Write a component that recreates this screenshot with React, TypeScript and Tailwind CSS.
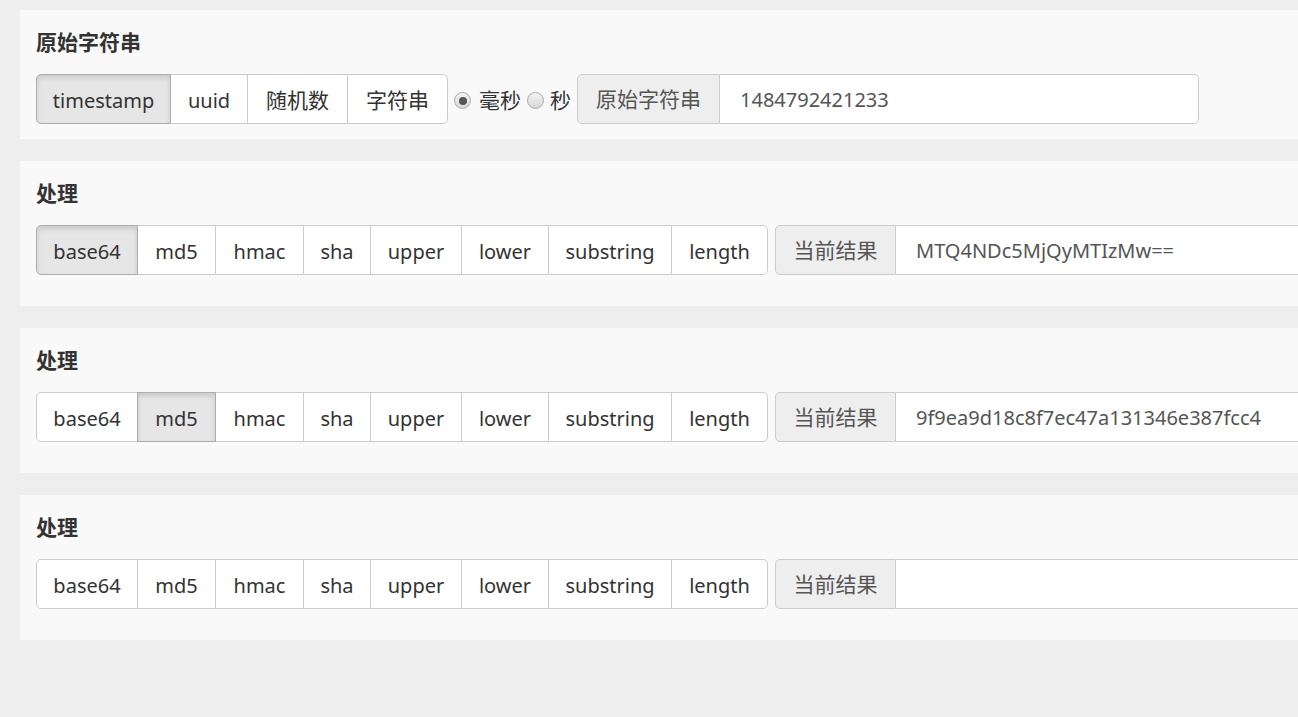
import React from "react";

const FONT = { fontFamily: '"Noto Sans", "Noto Sans CJK SC", sans-serif' };

type Btn = { label: string; w: string; cjk?: boolean };

const ops: Btn[] = [
  { label: "base64", w: "w-[102px]" },
  { label: "md5", w: "w-[79px]" },
  { label: "hmac", w: "w-[89px]" },
  { label: "sha", w: "w-[68px]" },
  { label: "upper", w: "w-[92px]" },
  { label: "lower", w: "w-[88px]" },
  { label: "substring", w: "w-[124px]" },
  { label: "length", w: "w-[97px]" },
];

const srcs: Btn[] = [
  { label: "timestamp", w: "w-[135px]" },
  { label: "uuid", w: "w-[78px]" },
  { label: "随机数", w: "w-[101px]", cjk: true },
  { label: "字符串", w: "w-[101px]", cjk: true },
];

function Group({ items, active }: { items: Btn[]; active: number }) {
  return (
    <div className="flex h-[50px] shrink-0">
      {items.map((b, i) => {
        const first = i === 0;
        const last = i === items.length - 1;
        const isActive = i === active;
        return (
          <div
            key={b.label}
            className={[
              "flex items-center justify-center h-full pt-[3px] text-[#333] border",
              b.cjk ? "text-[21px]" : "text-[20px]",
              b.w,
              first ? "rounded-l-[5px]" : "-ml-px",
              last ? "rounded-r-[5px]" : "",
              isActive
                ? "bg-[#e6e6e6] border-[#adadad] shadow-[inset_0_3px_5px_rgba(0,0,0,0.125)] relative z-10"
                : "bg-white border-[#ccc]",
            ].join(" ")}
          >
            {b.label}
          </div>
        );
      })}
    </div>
  );
}

function Radio({ checked }: { checked?: boolean }) {
  return (
    <span className="w-[17px] h-[17px] rounded-full border border-[#aaa] bg-gradient-to-b from-[#f4f4f4] to-[#d6d6d6] flex items-center justify-center shrink-0">
      {checked && <span className="w-[8px] h-[8px] rounded-full bg-[#555]" />}
    </span>
  );
}

function InputGroup({ label, value, addonW, wide }: { label: string; value: string; addonW: string; wide?: boolean }) {
  return (
    <div className={"flex h-[50px] " + (wide ? "flex-1" : "w-[622px]")}>
      <div
        className={
          "flex items-center justify-center h-full pt-[2px] bg-[#eee] border border-[#ccc] rounded-l-[5px] text-[21px] text-[#555] shrink-0 " +
          addonW
        }
      >
        {label}
      </div>
      <div className="flex-1 flex items-center h-full pt-[2px] bg-white border border-[#ccc] border-l-0 rounded-r-[5px] pl-[20px] text-[20px] text-[#555]">
        {value}
      </div>
    </div>
  );
}

function Panel({ title, children, pb }: { title: string; children: React.ReactNode; pb: string }) {
  return (
    <div className={"bg-[#f9f9f9] pt-[18px] px-[16px] " + pb}>
      <div className="h-[28px] leading-[28px] text-[21px] font-bold text-[#333]">{title}</div>
      <div className="mt-[18px] flex items-center">{children}</div>
    </div>
  );
}

export default function App() {
  const results = ["MTQ4NDc5MjQyMTIzMw==", "9f9ea9d18c8f7ec47a131346e387fcc4", ""];
  return (
    <div className="w-full h-[717px] overflow-hidden bg-[#eee]" style={FONT}>
      <div className="ml-[20px] w-[1400px] pt-[10px] flex flex-col gap-[22px]">
        <Panel title="原始字符串" pb="pb-[15px]">
          <Group items={srcs} active={0} />
          <div className="flex items-center ml-[6px] pt-[3px] text-[21px] text-[#333]">
            <Radio checked />
            <span className="ml-[8px]">毫秒</span>
            <span className="ml-[6px]"><Radio /></span>
            <span className="ml-[6px]">秒</span>
          </div>
          <div className="ml-[6px]">
            <InputGroup label="原始字符串" value="1484792421233" addonW="w-[143px]" />
          </div>
        </Panel>
        {results.map((r, idx) => (
          <Panel key={idx} title="处理" pb="pb-[31px]">
            <Group items={ops} active={idx === 0 ? 0 : idx === 1 ? 1 : -1} />
            <div className="ml-[7px] flex-1 flex">
              <InputGroup label="当前结果" value={r} addonW="w-[121px]" wide />
            </div>
          </Panel>
        ))}
      </div>
    </div>
  );
}
